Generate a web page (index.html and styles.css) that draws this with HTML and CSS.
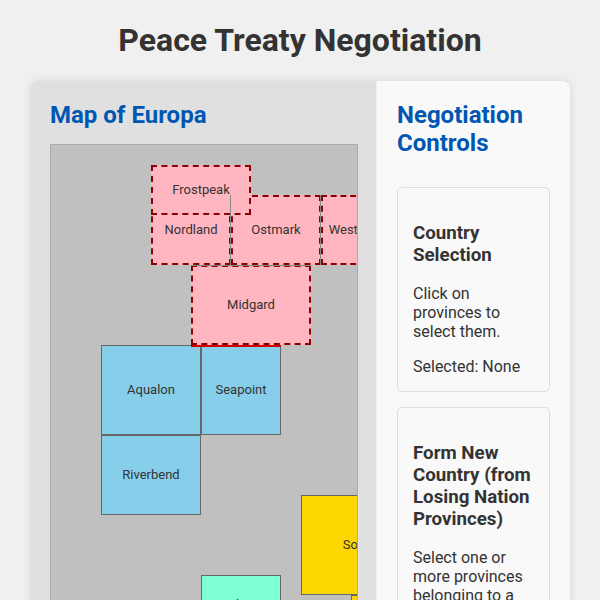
FILE: index.html
```html
<!DOCTYPE html>
<html lang="en">
<head>
    <meta charset="UTF-8">
    <meta name="viewport" content="width=device-width, initial-scale=1.0">
    <title>Peace Treaty Negotiation</title>
    <link rel="stylesheet" href="styles.css">
</head>
<body>
    <h1>Peace Treaty Negotiation</h1>
    <div class="container">
        <div class="map-panel">
            <h2>Map of Europa</h2>
            <div class="map">
                <div class="province losing nordland">Nordland</div>
                <div class="province losing ostmark">Ostmark</div>
                <div class="province losing westmark">Westmark</div>
                <div class="province losing midgard">Midgard</div>
                <div class="province losing frostpeak">Frostpeak</div>
                <div class="province blue aqualon">Aqualon</div>
                <div class="province blue seapoint">Seapoint</div>
                <div class="province blue riverbend">Riverbend</div>
                <div class="province gold solara">Solara</div>
                <div class="province gold sunreach">Sunreach</div>
                <div class="province green porthaven">Porthaven</div>
                <!-- borders between provinces -->
                <div class="border-line line-nord-ost"></div>
                <div class="border-line line-ost-west"></div>
                <div class="border-line line-midgard"></div>
                <div class="border-line front line-front"></div>
            </div>
        </div>
        <div class="controls">
            <h2>Negotiation Controls</h2>
            <div class="control-group">
                <h3>Country Selection</h3>
                <p>Click on provinces to select them.</p>
                <p>Selected: <span id="selected">None</span></p>
            </div>
            <div class="control-group">
                <h3>Form New Country (from Losing Nation Provinces)</h3>
                <p>Select one or more provinces belonging to a losing nation.</p>
            </div>
        </div>
    </div>
</body>
</html>
```
FILE: styles.css
```css
body {
    font-family: Roboto, "Liberation Sans", sans-serif;
    margin: 20px;
    background-color: #f0f0f0;
    color: #333;
}

h1 {
    font-size: 32px;
    line-height: 40px;
    margin: 0 0 21px;
    text-align: center;
}

h2 {
    color: #0056b3;
    font-size: 24px;
    line-height: 28px;
    margin: 0 0 15px;
}

.container {
    display: flex;
    margin: 0 10px;
    border-radius: 8px;
    background-color: #fff;
    box-shadow: 0 0 10px rgba(0, 0, 0, 0.1);
    overflow: hidden;
}

.map-panel {
    flex: 2;
    padding: 20px;
    background-color: #e0e0e0;
}

.map {
    position: relative;
    width: 100%;
    height: 600px;
    border: 1px solid #aaa;
    background-color: #c0c0c0;
    overflow: hidden;
}

/* provinces on the map canvas */
.province {
    position: absolute;
    box-sizing: border-box;
    display: flex;
    align-items: center;
    justify-content: center;
    padding-bottom: 2px;
    border: 1px solid #666;
    font-size: 13px;
}

.losing {
    background-color: #ffb6c1;
    border: 2px dashed #8b0000;
}

.blue { background-color: #87ceeb; }
.gold { background-color: #ffd700; }
.green { background-color: #7fffd4; }

.nordland { left: 100px; top: 50px; width: 80px; height: 70px; }
.ostmark { left: 180px; top: 50px; width: 90px; height: 70px; }
.westmark { left: 270px; top: 50px; width: 74px; height: 70px; }
.midgard { left: 140px; top: 120px; width: 120px; height: 80px; }
.frostpeak { left: 100px; top: 20px; width: 100px; height: 50px; }
.aqualon { left: 50px; top: 200px; width: 100px; height: 90px; }
.seapoint { left: 150px; top: 200px; width: 80px; height: 90px; }
.riverbend { left: 50px; top: 290px; width: 100px; height: 80px; }
.solara { left: 250px; top: 350px; width: 120px; height: 100px; }
.sunreach { left: 300px; top: 450px; width: 90px; height: 80px; }
.porthaven { left: 150px; top: 430px; width: 80px; height: 60px; }

.border-line {
    position: absolute;
    background-color: #888;
}

.line-nord-ost { left: 179px; top: 50px; width: 1px; height: 70px; }
.line-ost-west { left: 269px; top: 50px; width: 1px; height: 70px; }
.line-midgard { left: 140px; top: 120px; width: 120px; height: 1px; }
.line-front { left: 140px; top: 200px; width: 90px; height: 2px; }

.front {
    background-color: #d00000;
}

.controls {
    flex: 1;
    padding: 20px;
    border-left: 1px solid #eee;
    background-color: #f9f9f9;
}

.control-group {
    margin-top: 30px;
    padding: 15px;
    border: 1px solid #ddd;
    border-radius: 5px;
}

.control-group + .control-group {
    margin-top: 15px;
}

.control-group h3 {
    line-height: 22px;
    margin: 19px 0 18px;
}

.control-group p {
    font-size: 16px;
    line-height: 19px;
    margin: 16px 0;
}

.control-group p:last-child {
    margin-bottom: 0;
}
```
